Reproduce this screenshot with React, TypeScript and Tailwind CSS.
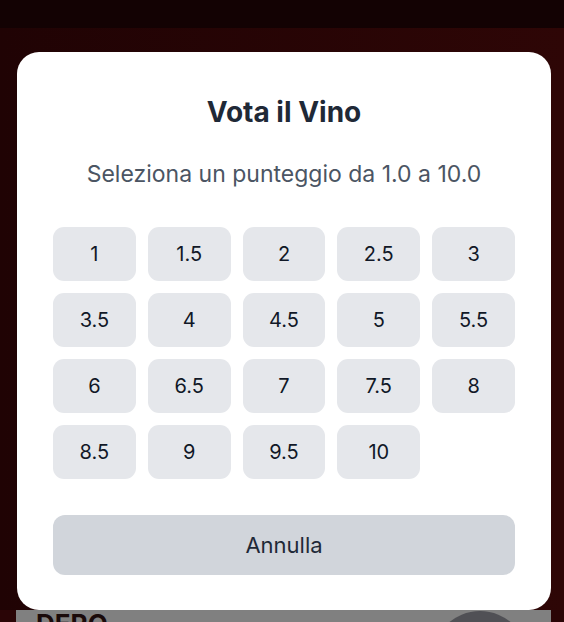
const scores = ["1", "1.5", "2", "2.5", "3", "3.5", "4", "4.5", "5", "5.5", "6", "6.5", "7", "7.5", "8", "8.5", "9", "9.5", "10"];

export default function App() {
  return (
    <div className="relative h-[622px] w-[564px] overflow-hidden bg-[#2a0506] font-['Inter',sans-serif]">
      {/* dimmed page underneath */}
      <div className="h-[28px] bg-[#130203]" />
      <div className="h-[582px] bg-gradient-to-r from-[#200304] to-[#2e0606]" />
      <div className="ml-[16px] mr-[13px] flex h-[40px] items-start justify-between bg-[#808080] pl-[20px] pr-[23px]">
        <span className="pt-[1px] text-[26px] font-bold leading-none text-[#1a0a0a]">DERO</span>
        <div className="mt-[1px] h-[96px] w-[96px] rounded-full bg-[#505055]" />
      </div>

      {/* modal */}
      <div className="absolute left-[17px] top-[52px] w-[534px] rounded-[22px] bg-white px-[36px] pb-[35px] pt-[44px]">
        <h2 className="text-center text-[28px] font-bold leading-[32px] text-[#1f2937]">Vota il Vino</h2>
        <p className="mt-[32px] text-center text-[23px] leading-[28px] text-[#4b5563]">Seleziona un punteggio da 1.0 a 10.0</p>
        <div className="mt-[39px] grid grid-cols-5 gap-[12px]">
          {scores.map((s) => (
            <button key={s} className="flex h-[54px] items-center justify-center rounded-[11px] bg-[#e5e7eb] text-[20px] text-[#111827]">
              {s}
            </button>
          ))}
        </div>
        <button className="mt-[36px] flex h-[60px] w-full items-center justify-center rounded-[12px] bg-[#d1d5db] text-[22px] text-[#1f2937]">
          Annulla
        </button>
      </div>
    </div>
  );
}
